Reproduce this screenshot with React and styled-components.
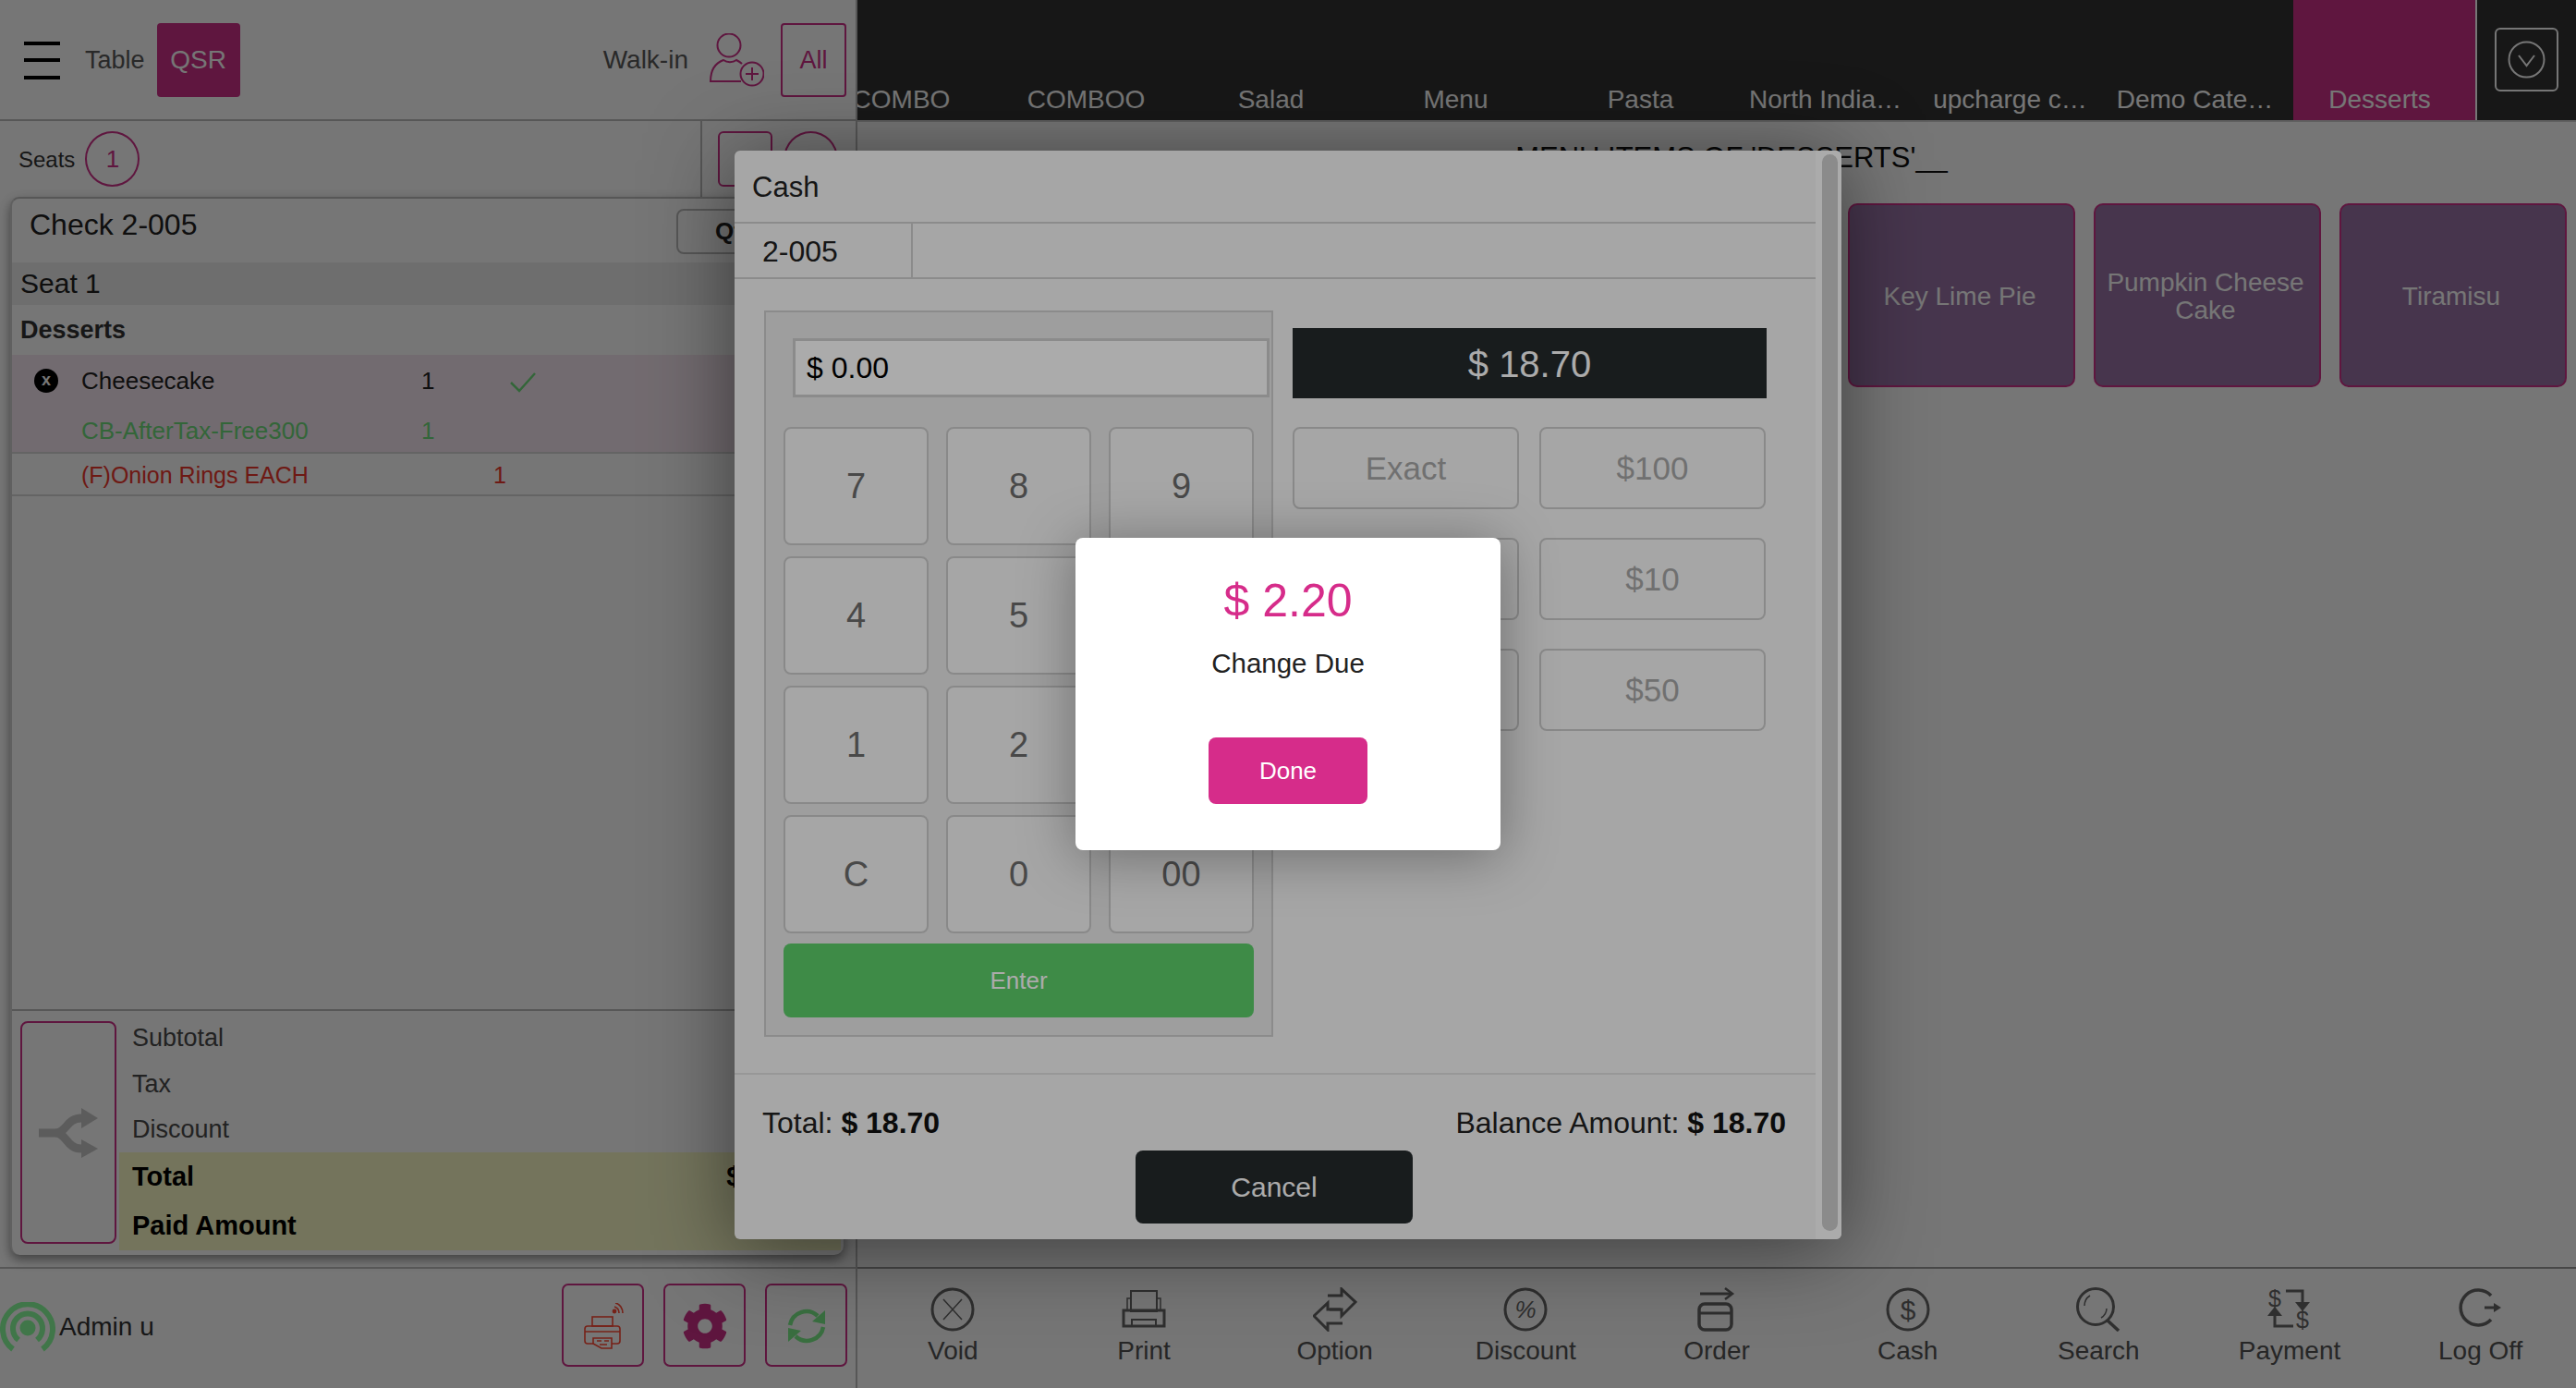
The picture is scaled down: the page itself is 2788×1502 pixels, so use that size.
import React from 'react'
import styled, { createGlobalStyle } from 'styled-components'
import { FaCog } from 'react-icons/fa'

const pink = '#d62c8a'
const pinkDim = '#ce3089'

const GlobalStyle = createGlobalStyle`
  html, body {
    margin: 0;
    width: 2788px;
    height: 1502px;
    overflow: hidden;
    background: #fff;
    font-family: "Liberation Sans", Arial, sans-serif;
  }
  * { box-sizing: border-box; }
`

const Page = styled.div`
  position: relative;
  width: 2788px;
  height: 1502px;
  display: grid;
  grid-template-columns: 928px 1860px;
  grid-template-rows: 1371px 131px;
  overflow: hidden;
`

const LeftColumn = styled.section`
  display: flex;
  flex-direction: column;
  border-right: 2px solid #bdbdbd;
  min-height: 0;
`

const Header = styled.header`
  height: 131px;
  flex: none;
  display: flex;
  align-items: center;
  padding: 1px 10px 0 26px;
  border-bottom: 2px solid #bdbdbd;
`

const Burger = styled.div`
  width: 39px;
  height: 41px;
  display: flex;
  flex-direction: column;
  justify-content: space-between;
  margin-right: 27px;
  span { display: block; height: 4px; background: #000; }
`

const HeaderText = styled.span`
  font-size: ${p => p.$size || 27}px;
  color: #5b5b5b;
`

const QsrButton = styled.div`
  width: 90px;
  height: 80px;
  margin-left: 13px;
  border-radius: 4px;
  background: ${pinkDim};
  color: #fff;
  font-size: 28px;
  display: flex;
  align-items: center;
  justify-content: center;
`

const HeaderRight = styled.div`
  margin-left: auto;
  display: flex;
  align-items: center;
`

const AllButton = styled.div`
  width: 71px;
  height: 80px;
  margin-left: 18px;
  border: 2px solid ${pinkDim};
  border-radius: 4px;
  color: ${pinkDim};
  font-size: 27px;
  display: flex;
  align-items: center;
  justify-content: center;
`

const SeatsRow = styled.div`
  height: 82px;
  flex: none;
  display: flex;
  align-items: center;
  padding-left: 20px;
`

const SeatsLabel = styled.span`
  font-size: 24px;
  margin-top: 2px;
  margin-right: 11px;
  color: #333;
`

const SeatCircle = styled.div`
  width: 59px;
  height: 60px;
  border: 2px solid ${pinkDim};
  border-radius: 50%;
  color: ${pinkDim};
  font-size: 26px;
  display: flex;
  align-items: center;
  justify-content: center;
`

const SeatTools = styled.div`
  margin-left: auto;
  width: 168px;
  height: 100%;
  border-left: 2px solid #bdbdbd;
  padding: 11px 0 0 17px;
  display: flex;
  gap: 12px;
`

const SeatTool = styled.div`
  width: 59px;
  height: 60px;
  border: 2px solid ${pinkDim};
  border-radius: ${p => (p.$round ? '50%' : '6px')};
`

const CheckCard = styled.div`
  flex: 1;
  min-height: 0;
  margin: 0 13px 13px 11px;
  display: flex;
  flex-direction: column;
  border-top: 2px solid #bdbdbd;
  border-left: 2px solid #cfcfcf;
  border-radius: 10px;
  background: #fff;
  box-shadow: 0 5px 12px rgba(0, 0, 0, 0.45);
  overflow: hidden;
`

const CheckHeader = styled.div`
  height: 69px;
  flex: none;
  display: flex;
  align-items: flex-start;
  justify-content: space-between;
  padding: 8px 0 0 19px;
`

const CheckTitle = styled.div`
  font-size: 32px;
  line-height: 40px;
  color: #222;
`

const QtyButton = styled.div`
  width: 181px;
  height: 49px;
  margin-top: 3px;
  padding-left: 40px;
  border: 2px solid #bdbdbd;
  border-radius: 8px;
  font-size: 26px;
  font-weight: bold;
  line-height: 45px;
  color: #222;
`

const SeatBar = styled.div`
  height: 46px;
  flex: none;
  padding-left: 9px;
  background: #eeeeee;
  font-size: 30px;
  line-height: 46px;
  color: #222;
`

const GroupBar = styled.div`
  height: 54px;
  flex: none;
  padding-left: 9px;
  font-size: 27px;
  font-weight: bold;
  line-height: 54px;
  color: #333;
`

const ItemBlock = styled.div`
  height: 107px;
  flex: none;
  background: #f8e8f2;
  border-bottom: 2px solid #d8d8d8;
`

const ItemRow = styled.div`
  height: ${p => p.$h}px;
  display: flex;
  align-items: center;
  padding-left: 24px;
  font-size: ${p => p.$size || 26}px;
  color: ${p => p.$color || '#222'};
`

const Remove = styled.span`
  width: 26px;
  height: 26px;
  margin-right: 25px;
  border-radius: 50%;
  background: #000;
  color: #fff;
  font-size: 18px;
  font-weight: bold;
  line-height: 25px;
  text-align: center;
`

const ItemName = styled.span`
  width: ${p => p.$w}px;
  margin-left: ${p => p.$indent || 0}px;
  white-space: nowrap;
`

const ItemQty = styled.span`
  width: 96px;
`

const ItemCheck = styled.svg`
  margin-top: 3px;
`

const PlainItem = styled.div`
  height: 46px;
  flex: none;
  border-bottom: 2px solid #d8d8d8;
`

const CardSpacer = styled.div`
  flex: 1;
`

const TotalsArea = styled.div`
  height: 266px;
  flex: none;
  display: flex;
  border-top: 2px solid #bdbdbd;
  padding: 4px 3px 0 9px;
`

const SplitBox = styled.div`
  width: 104px;
  height: 241px;
  margin-top: 7px;
  flex: none;
  border: 2px solid ${pinkDim};
  border-radius: 8px;
  display: flex;
  align-items: center;
  justify-content: center;
  color: #c8c8c8;
`

const TotalsList = styled.div`
  flex: 1;
  margin-left: 3px;
  display: flex;
  flex-direction: column;
`

const TotalLine = styled.div`
  height: 49.5px;
  padding-left: 14px;
  font-size: 27px;
  line-height: 51px;
  color: #4c4c4c;
`

const TotalStrong = styled.div`
  height: 53px;
  display: flex;
  justify-content: space-between;
  padding: 0 27px 0 14px;
  background: #fbfcc8;
  font-size: 29px;
  font-weight: bold;
  line-height: 53px;
  color: #000;
`

const TopColumn = styled.section`
  display: flex;
  flex-direction: column;
  min-width: 0;
  min-height: 0;
`

const TabBar = styled.nav`
  height: 132px;
  flex: none;
  display: flex;
  justify-content: flex-end;
  background: #343434;
  border-bottom: 2px solid #cfcfcf;
`

const Tabs = styled.div`
  flex: 1;
  min-width: 0;
  display: flex;
  justify-content: flex-end;
  gap: 3px;
  overflow: hidden;
`

const Tab = styled.div`
  width: 197px;
  flex: none;
  display: flex;
  align-items: flex-end;
  justify-content: center;
  padding: 0 10px 6px 0;
  color: #fff;
  background: ${p => (p.$active ? pinkDim : 'transparent')};
  font-size: 28px;
  line-height: 32px;
  white-space: nowrap;
`

const Collapse = styled.div`
  width: 109px;
  flex: none;
  border-left: 2px solid #fff;
  padding: 30px 0 0 19px;
`

const CollapseButton = styled.div`
  width: 69px;
  height: 69px;
  border: 2px solid #fff;
  border-radius: 6px;
  display: flex;
  align-items: center;
  justify-content: center;
  color: #fff;
`

const MenuArea = styled.main`
  flex: 1;
  min-height: 0;
  padding: 18px 10px 0 0;
`

const MenuTitle = styled.div`
  padding-left: 42px;
  font-size: 31px;
  line-height: 42px;
  text-align: center;
  color: #111;
`

const MenuCards = styled.div`
  margin-top: 28px;
  display: flex;
  justify-content: flex-end;
  gap: 20px;
`

const MenuCard = styled.div`
  width: 246px;
  height: 199px;
  padding: 2px 12px 0 8px;
  border: 2px solid ${pinkDim};
  border-radius: 10px;
  background: #9a74a8;
  color: #fff;
  font-size: 28px;
  line-height: 30px;
  display: flex;
  align-items: center;
  justify-content: center;
  text-align: center;
`

const LeftFooter = styled.footer`
  display: flex;
  align-items: center;
  border-top: 2px solid #bdbdbd;
  border-right: 2px solid #bdbdbd;
  padding: 0 9px 8px 0;
`

const AdminName = styled.span`
  margin-left: 4px;
  margin-top: 4px;
  font-size: 28px;
  color: #333;
`

const FooterTools = styled.div`
  margin-left: auto;
  display: flex;
  gap: 21px;
`

const FooterTool = styled.div`
  width: 89px;
  height: 90px;
  border: 2px solid ${pinkDim};
  border-radius: 7px;
  display: flex;
  align-items: center;
  justify-content: center;
  padding-top: 3px;
  color: ${p => p.$color};
`

const NavBar = styled.nav`
  display: grid;
  grid-template-columns: repeat(9, 1fr);
  border-top: 2px solid #9c9c9c;
`

const NavItem = styled.div`
  display: flex;
  flex-direction: column;
  align-items: center;
  padding-top: 20px;
  color: #666;
  font-size: 28px;
  svg { display: block; }
`

const NavLabel = styled.span`
  margin-top: 5px;
  line-height: 32px;
  color: #555;
`

const Backdrop = styled.div`
  position: absolute;
  inset: 0;
  background: rgba(0, 0, 0, ${p => p.$alpha});
  display: flex;
  justify-content: center;
  align-items: ${p => (p.$center ? 'center' : 'flex-start')};
  padding-top: ${p => p.$top || 0}px;
`

const Dialog = styled.div`
  width: 1198px;
  height: 1178px;
  display: flex;
  background: #f8f8f8;
  border-radius: 6px;
  box-shadow: 0 10px 90px rgba(0, 0, 0, 0.5);
  overflow: hidden;
`

const DialogBody = styled.div`
  flex: 1;
  min-width: 0;
  display: flex;
  flex-direction: column;
`

const DialogTitle = styled.div`
  height: 79px;
  flex: none;
  padding-left: 19px;
  border-bottom: 2px solid #cfcfcf;
  font-size: 31px;
  line-height: 80px;
  color: #222;
`

const CheckStrip = styled.div`
  height: 60px;
  flex: none;
  border-bottom: 2px solid #cfcfcf;
`

const CheckCell = styled.div`
  width: 193px;
  height: 100%;
  padding-left: 30px;
  border-right: 2px solid #cfcfcf;
  font-size: 32px;
  line-height: 60px;
  color: #222;
`

const PayArea = styled.div`
  flex: none;
  display: flex;
  padding: 34px 0 0 32px;
`

const Keypad = styled.div`
  width: 551px;
  height: 786px;
  flex: none;
  padding: 28px 0 0 19px;
  border: 2px solid #d0d0d0;
  background: #ececec;
`

const AmountInput = styled.div`
  width: 516px;
  height: 64px;
  margin-left: 10px;
  padding-left: 12px;
  border: 3px solid #cfcfcf;
  background: #fff;
  font-size: 32px;
  line-height: 58px;
  color: #000;
`

const KeyGrid = styled.div`
  width: 509px;
  margin-top: 32px;
  display: grid;
  grid-template-columns: repeat(3, 157px);
  grid-auto-rows: 128px;
  gap: 12px 19px;
`

const Key = styled.div`
  border: 2px solid #cdcdcd;
  border-radius: 8px;
  background: #f8f8f8;
  color: #6d6d6d;
  font-size: 38px;
  display: flex;
  align-items: center;
  justify-content: center;
`

const EnterButton = styled.div`
  width: 509px;
  height: 80px;
  margin-top: 11px;
  border-radius: 8px;
  background: #5dcf6b;
  color: #fff;
  font-size: 26px;
  display: flex;
  align-items: center;
  justify-content: center;
`

const PayRight = styled.div`
  width: 513px;
  margin-left: 21px;
  padding-top: 19px;
`

const DueBox = styled.div`
  height: 76px;
  padding-top: 2px;
  background: #242a2c;
  color: #fff;
  font-size: 40px;
  display: flex;
  align-items: center;
  justify-content: center;
`

const QuickGrid = styled.div`
  margin-top: 31px;
  display: grid;
  grid-template-columns: 245px 245px;
  grid-auto-rows: 89px;
  gap: 31px 22px;
`

const QuickButton = styled.div`
  border: 2px solid #cdcdcd;
  border-radius: 8px;
  color: #a8a8a8;
  font-size: 35px;
  display: flex;
  align-items: center;
  justify-content: center;
`

const DialogFooter = styled.div`
  margin-top: 39px;
  padding: 27px 32px 0 30px;
  border-top: 2px solid #e2e2e2;
`

const AmountRow = styled.div`
  display: flex;
  justify-content: space-between;
  font-size: 32px;
  line-height: 50px;
  color: #222;
  b { color: #111; }
`

const CancelButton = styled.div`
  width: 300px;
  height: 79px;
  margin: 5px auto 0;
  border-radius: 8px;
  background: #242a2c;
  color: #fff;
  font-size: 30px;
  display: flex;
  align-items: center;
  justify-content: center;
`

const ScrollTrack = styled.div`
  width: 28px;
  flex: none;
  padding: 4px 4px 9px 7px;
  background: #fff;
`

const ScrollThumb = styled.div`
  height: 100%;
  border-radius: 9px;
  background: #cfcfcf;
`

const ChangeModal = styled.div`
  width: 460px;
  height: 338px;
  display: flex;
  flex-direction: column;
  align-items: center;
  padding-top: 38px;
  background: #fff;
  border-radius: 8px;
  box-shadow: 0 6px 60px rgba(0, 0, 0, 0.35);
`

const ChangeAmount = styled.div`
  font-size: 50px;
  line-height: 60px;
  color: ${pink};
`

const ChangeLabel = styled.div`
  margin-top: 20px;
  font-size: 29.5px;
  line-height: 36px;
  color: #222;
`

const DoneButton = styled.div`
  width: 172px;
  height: 72px;
  margin-top: 62px;
  border-radius: 8px;
  background: ${pink};
  color: #fff;
  font-size: 26px;
  display: flex;
  align-items: center;
  justify-content: center;
`

const UserIconSvg = styled.svg`
  margin-left: 22px;
`

const AntennaSvg = styled.svg`
  flex: none;
  margin-top: 8px;
`

const glyphFont = '"Liberation Sans", Arial, sans-serif'

const UserPlusIcon = () => (
  <UserIconSvg width="60" height="58" viewBox="0 0 60 58" fill="none" stroke={pinkDim} strokeWidth="2">
    <circle cx="22" cy="13" r="12.5" />
    <path d="M35 52H2C2 42 5 33 16 29C20 32 26 32 30 29C32 30 34 31 36 33" />
    <circle cx="47" cy="44" r="12.5" />
    <path d="M47 37V51M40 44H54" />
  </UserIconSvg>
)

const AntennaIcon = () => (
  <AntennaSvg width="60" height="58" viewBox="0 0 60 58" fill="none" stroke="#8bff9e" strokeWidth="6">
    <path d="M14 51A27 27 0 1 1 46 51" />
    <path d="M20 41A16 16 0 1 1 40 41" />
    <circle cx="30" cy="28" r="8.5" fill="#8bff9e" stroke="none" />
  </AntennaSvg>
)

const WifiPrinterIcon = () => (
  <svg width="44" height="50" viewBox="0 0 44 50" fill="none" stroke="#ff4a35" strokeWidth="1.6">
    <rect x="2" y="25" width="38" height="19" rx="3" />
    <rect x="10" y="15" width="22" height="10" />
    <path d="M2 31H40" />
    <path d="M11 38H31V49H20L11 44Z" fill="#fff" />
    <path d="M15 41H20M23 41H28M18 45H26" />
    <circle cx="34" cy="9" r="1.6" fill="#ff4a35" />
    <path d="M34 4C37 5 39 8 39 11M35 0C40 1 43 6 43 11" />
  </svg>
)

const RefreshIcon = () => (
  <svg width="48" height="44" viewBox="0 0 48 44" fill="none" stroke="#7df08c" strokeWidth="4.5">
    <path d="M6 21A18 18 0 0 1 36 11" />
    <path d="M42 23A18 18 0 0 1 12 33" />
    <path d="M44 5V20L30 17Z" fill="#7df08c" stroke="none" />
    <path d="M4 39V24L18 27Z" fill="#7df08c" stroke="none" />
  </svg>
)

const SplitIcon = () => (
  <svg width="64" height="54" viewBox="0 0 64 54" fill="none" stroke="currentColor" strokeWidth="9">
    <path d="M0 27H18C30 27 30 11 46 11" />
    <path d="M18 27C30 27 30 44 46 44" />
    <path d="M46 0L64 11L46 22Z" fill="currentColor" stroke="none" />
    <path d="M46 34L64 44L46 54Z" fill="currentColor" stroke="none" />
  </svg>
)

const ChevronCircle = () => (
  <svg width="41" height="41" viewBox="0 0 41 41" fill="none" stroke="currentColor" strokeWidth="2">
    <circle cx="20.5" cy="20.5" r="19" />
    <path d="M12 16L20.5 27L29 16" />
  </svg>
)

const Icon = ({ children }) => (
  <svg width="48" height="48" viewBox="0 0 48 48" fill="none" stroke="currentColor" strokeWidth="3">
    {children}
  </svg>
)

const navItems = [
  {
    label: 'Void',
    icon: (
      <>
        <circle cx="24" cy="24" r="22" />
        <path d="M14 13L34 35M34 13L14 35" strokeWidth="1.5" />
      </>
    ),
  },
  {
    label: 'Print',
    icon: (
      <>
        <rect x="10" y="4" width="28" height="22" strokeWidth="2" />
        <path d="M6 24V12H10M42 24V12H38" strokeWidth="1.5" />
        <rect x="2" y="25" width="44" height="17" />
        <path d="M11 42V35H37V42" strokeWidth="2" />
      </>
    ),
  },
  {
    label: 'Option',
    icon: (
      <>
        <path d="M16 9H31V2L46 16L31 31V24H18" />
        <path d="M32 39H16V46L1 31L16 17V24H30" />
      </>
    ),
  },
  {
    label: 'Discount',
    icon: (
      <>
        <circle cx="24" cy="24" r="22" />
        <text x="24" y="33" textAnchor="middle" fontSize="26" fontStyle="italic" fontFamily={glyphFont} fill="currentColor" stroke="none">%</text>
      </>
    ),
  },
  {
    label: 'Order',
    icon: (
      <>
        <path d="M6 7H40" />
        <path d="M33 1L41 7L33 13" strokeWidth="2.5" />
        <rect x="5" y="18" width="35" height="28" rx="6" strokeWidth="3.5" />
        <path d="M5 28H40" />
      </>
    ),
  },
  {
    label: 'Cash',
    icon: (
      <>
        <circle cx="24" cy="24" r="22" />
        <text x="24" y="35" textAnchor="middle" fontSize="30" fontFamily={glyphFont} fill="currentColor" stroke="none">$</text>
      </>
    ),
  },
  {
    label: 'Search',
    icon: (
      <>
        <circle cx="21" cy="21" r="19.5" />
        <path d="M34 36L46 47" strokeWidth="3.5" />
        <path d="M9 20A13 13 0 0 1 15 9M33 23A12 12 0 0 1 27 33" strokeWidth="1.5" />
      </>
    ),
  },
  {
    label: 'Payment',
    icon: (
      <>
        <text x="8" y="21" textAnchor="middle" fontSize="25" fontFamily={glyphFont} fill="currentColor" stroke="none">$</text>
        <text x="38" y="44" textAnchor="middle" fontSize="25" fontFamily={glyphFont} fill="currentColor" stroke="none">$</text>
        <path d="M20 4H38V20" />
        <path d="M30 16L38 26L46 16Z" fill="currentColor" stroke="none" />
        <path d="M28 42H8V28" />
        <path d="M0 31L8 21L16 31Z" fill="currentColor" stroke="none" />
      </>
    ),
  },
  {
    label: 'Log Off',
    icon: (
      <>
        <path d="M35 9A19 19 0 1 0 35 35" strokeWidth="3.5" />
        <path d="M28 22H38" />
        <path d="M38 17L46 22L38 27Z" fill="currentColor" stroke="none" />
      </>
    ),
  },
]

const tabs = ['COMBO', 'COMBOO', 'Salad', 'Menu', 'Pasta', 'North India…', 'upcharge c…', 'Demo Cate…', 'Desserts']
const keys = ['7', '8', '9', '4', '5', '6', '1', '2', '3', 'C', '0', '00']
const quick = ['Exact', '$100', '$5', '$10', '$20', '$50']

export default function App() {
  return (
    <>
      <GlobalStyle />
      <Page>
        <LeftColumn>
          <Header>
            <Burger><span /><span /><span /></Burger>
            <HeaderText $size={27}>Table</HeaderText>
            <QsrButton>QSR</QsrButton>
            <HeaderRight>
              <HeaderText $size={28}>Walk-in</HeaderText>
              <UserPlusIcon />
              <AllButton>All</AllButton>
            </HeaderRight>
          </Header>
          <SeatsRow>
            <SeatsLabel>Seats</SeatsLabel>
            <SeatCircle>1</SeatCircle>
            <SeatTools>
              <SeatTool />
              <SeatTool $round />
            </SeatTools>
          </SeatsRow>
          <CheckCard>
            <CheckHeader>
              <CheckTitle>Check 2-005</CheckTitle>
              <QtyButton>Qty</QtyButton>
            </CheckHeader>
            <SeatBar>Seat 1</SeatBar>
            <GroupBar>Desserts</GroupBar>
            <ItemBlock>
              <ItemRow $h={56}>
                <Remove>x</Remove>
                <ItemName $w={368}>Cheesecake</ItemName>
                <ItemQty>1</ItemQty>
                <ItemCheck width="28" height="22" viewBox="0 0 28 22" fill="none" stroke="#6fdc7c" strokeWidth="2.5">
                  <path d="M1 11L10 20L27 1" />
                </ItemCheck>
              </ItemRow>
              <ItemRow $h={52} $color="#6fdc7c">
                <ItemName $w={368} $indent={51}>CB-AfterTax-Free300</ItemName>
                <ItemQty>1</ItemQty>
              </ItemRow>
            </ItemBlock>
            <PlainItem>
              <ItemRow $h={46} $size={25} $color="#f0382e">
                <ItemName $w={446} $indent={51}>(F)Onion Rings EACH</ItemName>
                <ItemQty>1</ItemQty>
              </ItemRow>
            </PlainItem>
            <CardSpacer />
            <TotalsArea>
              <SplitBox><SplitIcon /></SplitBox>
              <TotalsList>
                <TotalLine>Subtotal</TotalLine>
                <TotalLine>Tax</TotalLine>
                <TotalLine>Discount</TotalLine>
                <TotalStrong><span>Total</span><span>$ 18.70</span></TotalStrong>
                <TotalStrong><span>Paid Amount</span></TotalStrong>
              </TotalsList>
            </TotalsArea>
          </CheckCard>
        </LeftColumn>

        <TopColumn>
          <TabBar>
            <Tabs>
              {tabs.map(t => (
                <Tab key={t} $active={t === 'Desserts'}>{t}</Tab>
              ))}
            </Tabs>
            <Collapse>
              <CollapseButton><ChevronCircle /></CollapseButton>
            </Collapse>
          </TabBar>
          <MenuArea>
            <MenuTitle>MENU ITEMS OF 'DESSERTS'__</MenuTitle>
            <MenuCards>
              <MenuCard>Key Lime Pie</MenuCard>
              <MenuCard>Pumpkin Cheese Cake</MenuCard>
              <MenuCard>Tiramisu</MenuCard>
            </MenuCards>
          </MenuArea>
        </TopColumn>

        <LeftFooter>
          <AntennaIcon />
          <AdminName>Admin u</AdminName>
          <FooterTools>
            <FooterTool><WifiPrinterIcon /></FooterTool>
            <FooterTool $color={pinkDim}><FaCog size={50} /></FooterTool>
            <FooterTool><RefreshIcon /></FooterTool>
          </FooterTools>
        </LeftFooter>

        <NavBar>
          {navItems.map(item => (
            <NavItem key={item.label}>
              <Icon>{item.icon}</Icon>
              <NavLabel>{item.label}</NavLabel>
            </NavItem>
          ))}
        </NavBar>

        <Backdrop $alpha={0.31} $top={163}>
          <Dialog>
            <DialogBody>
              <DialogTitle>Cash</DialogTitle>
              <CheckStrip><CheckCell>2-005</CheckCell></CheckStrip>
              <PayArea>
                <Keypad>
                  <AmountInput>$ 0.00</AmountInput>
                  <KeyGrid>
                    {keys.map(k => <Key key={k}>{k}</Key>)}
                  </KeyGrid>
                  <EnterButton>Enter</EnterButton>
                </Keypad>
                <PayRight>
                  <DueBox>$ 18.70</DueBox>
                  <QuickGrid>
                    {quick.map(q => <QuickButton key={q}>{q}</QuickButton>)}
                  </QuickGrid>
                </PayRight>
              </PayArea>
              <DialogFooter>
                <AmountRow>
                  <span>Total: <b>$ 18.70</b></span>
                  <span>Balance Amount: <b>$ 18.70</b></span>
                </AmountRow>
                <CancelButton>Cancel</CancelButton>
              </DialogFooter>
            </DialogBody>
            <ScrollTrack><ScrollThumb /></ScrollTrack>
          </Dialog>
        </Backdrop>

        <Backdrop $alpha={0.33} $center>
          <ChangeModal>
            <ChangeAmount>$ 2.20</ChangeAmount>
            <ChangeLabel>Change Due</ChangeLabel>
            <DoneButton>Done</DoneButton>
          </ChangeModal>
        </Backdrop>
      </Page>
    </>
  )
}
